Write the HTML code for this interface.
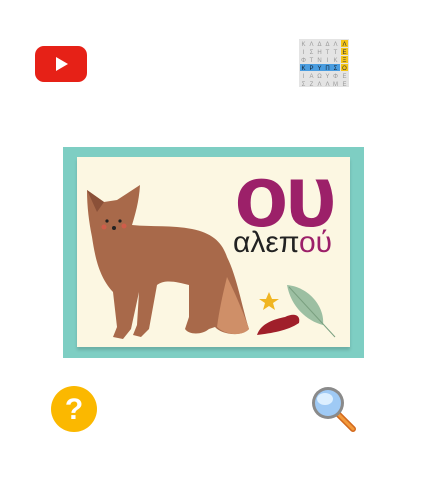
<!DOCTYPE html>
<html><head><meta charset="utf-8">
<style>
html,body{margin:0;padding:0;background:#fff;width:426px;height:480px;overflow:hidden;font-family:"Liberation Sans",sans-serif}
.abs{position:absolute}
</style></head><body>
<svg class="abs" style="left:35px;top:46px" width="52" height="36" viewBox="0 0 52 36">
<rect x="0" y="0" width="52" height="36" rx="9" fill="#e62117"/>
<polygon points="21,11 21,25 33,18" fill="#fff"/>
</svg>
<svg class="abs" style="left:299px;top:39px" width="50" height="48" viewBox="0 0 50 48">
<rect width="50" height="48" fill="#e4e4e4"/>
<g font-size="6" fill="#999" font-family="Liberation Sans" text-anchor="middle">
<rect x="42" y="1" width="7" height="7" fill="#f5c518"/><rect x="42" y="9" width="7" height="7" fill="#f5c518"/><rect x="42" y="17" width="7" height="7" fill="#f5c518"/><rect x="42" y="25" width="7" height="7" fill="#f5c518"/>
<rect x="1" y="25" width="40" height="7" fill="#4a9de0"/>
<text x="4.5" y="7">Κ</text><text x="12.5" y="7">Λ</text><text x="20.5" y="7">Δ</text><text x="28.5" y="7">Δ</text><text x="36.5" y="7">Λ</text><text x="45.5" y="7" fill="#333">Λ</text>
<text x="4.5" y="15">Ι</text><text x="12.5" y="15">Σ</text><text x="20.5" y="15">Η</text><text x="28.5" y="15">Τ</text><text x="36.5" y="15">Τ</text><text x="45.5" y="15" fill="#333">Ε</text>
<text x="4.5" y="23">Φ</text><text x="12.5" y="23">Τ</text><text x="20.5" y="23">Ν</text><text x="28.5" y="23">Ι</text><text x="36.5" y="23">Κ</text><text x="45.5" y="23" fill="#333">Ξ</text>
<text x="4.5" y="31" fill="#123">Κ</text><text x="12.5" y="31" fill="#123">Ρ</text><text x="20.5" y="31" fill="#123">Υ</text><text x="28.5" y="31" fill="#123">Π</text><text x="36.5" y="31" fill="#123">Σ</text><text x="45.5" y="31" fill="#333">Ο</text>
<text x="4.5" y="39">Ι</text><text x="12.5" y="39">Α</text><text x="20.5" y="39">Ω</text><text x="28.5" y="39">Υ</text><text x="36.5" y="39">Φ</text><text x="45.5" y="39">Ε</text>
<text x="4.5" y="47">Σ</text><text x="12.5" y="47">Ζ</text><text x="20.5" y="47">Λ</text><text x="28.5" y="47">Λ</text><text x="36.5" y="47">Μ</text><text x="45.5" y="47">Ε</text>
</g></svg>
<div class="abs" style="left:63px;top:147px;width:301px;height:211px;background:#7ecec3"></div>
<div class="abs" style="left:77px;top:157px;width:273px;height:190px;background:#fcf7e2;box-shadow:0 3px 3px rgba(0,0,0,0.15)"></div>
<div class="abs" style="left:226px;top:146px;width:116px;font-size:88px;color:#9c2069;font-weight:bold;letter-spacing:-3px;text-align:center;line-height:100px;font-family:'Liberation Sans',sans-serif">ου</div>
<div class="abs" style="left:233px;top:225px;font-size:30px;color:#222;line-height:36px;font-family:'Liberation Sans','DejaVu Sans',sans-serif">αλεπ<span style="color:#9c2069">ού</span></div>
<svg class="abs" style="left:77px;top:157px" width="273" height="190" viewBox="0 0 273 190">
<path d="M10,33 L27,45 L40,43 L63,28 C62,45 58,58 55,68 C75,70 95,68 115,72 C135,76 145,85 150,100 C160,120 165,150 172,172 C165,180 145,178 138,170 L132,172 C125,178 112,178 108,172 L112,160 L112,128 C100,125 88,122 80,128 L72,172 L64,180 L56,178 L60,168 L62,135 L54,172 L46,182 L36,180 L40,170 L36,135 C22,120 18,100 15,80 C12,65 10,50 10,33 Z" fill="#a8694a"/>
<path d="M150,120 C160,140 168,160 172,172 C165,180 148,178 140,170 C142,155 145,140 150,120 Z" fill="#cf8f68"/>
<path d="M10,33 L27,45 L20,55 Z" fill="#8a5038"/>
<circle cx="30" cy="64" r="1.6" fill="#222"/><circle cx="43" cy="64" r="1.6" fill="#222"/>
<circle cx="37" cy="71" r="2" fill="#222"/>
<circle cx="27" cy="70" r="2.5" fill="#e0594a" opacity=".7"/><circle cx="47" cy="69" r="2.5" fill="#e0594a" opacity=".7"/>
<polygon points="192,135 195,142 202,142 196,146 198,153 192,149 186,153 188,146 182,142 189,142" fill="#f0b521"/>
<path d="M180,178 C184,166 198,162 208,160 C216,156 224,157 222,166 C210,174 195,176 180,178 Z" fill="#a01f2a"/>
<path d="M210,128 C232,130 248,150 246,168 C230,164 214,150 210,128 Z" fill="#9cbfa2"/>
<path d="M212,130 L258,180" stroke="#7aa080" stroke-width="1"/>
</svg>
<svg class="abs" style="left:51px;top:386px" width="46" height="46" viewBox="0 0 46 46">
<circle cx="23" cy="23" r="23" fill="#fbb800"/>
<text x="23" y="33" font-size="30" font-weight="bold" fill="#fff" text-anchor="middle" font-family="Liberation Sans">?</text>
</svg>
<svg class="abs" style="left:305px;top:384px" width="54" height="52" viewBox="0 0 54 52">
<line x1="33" y1="30" x2="48" y2="45" stroke="#d2691e" stroke-width="6" stroke-linecap="round"/>
<line x1="33" y1="30" x2="48" y2="45" stroke="#f39a3b" stroke-width="3" stroke-linecap="round"/>
<circle cx="23" cy="19" r="16" fill="#8a8a8a"/>
<circle cx="23" cy="19" r="13" fill="#9fcaf5"/>
<ellipse cx="20" cy="15" rx="8" ry="6" fill="#dcefff"/>
</svg>
</body></html>
